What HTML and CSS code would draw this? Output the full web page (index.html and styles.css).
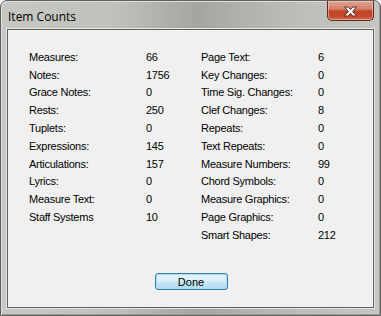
FILE: index.html
```html
<!DOCTYPE html>
<html lang="en">
<head>
  <meta charset="UTF-8">
  <title>Item Counts</title>
  <link rel="stylesheet" href="styles.css">
</head>
<body>

<div class="window">
  <div class="titlebar">
    <span class="title">Item Counts</span>
    <button class="close" aria-label="Close">
      <svg width="15" height="11" viewBox="0 0 15 11">
        <path d="M1.5 1 H5.3 L7.5 3.6 L9.7 1 H13.5 L9.6 5.5 L13.5 10 H9.7 L7.5 7.4 L5.3 10 H1.5 L5.4 5.5 Z" fill="#ffffff" stroke="#5a2a20" stroke-width="1" stroke-linejoin="round"/>
      </svg>
    </button>
  </div>

  <div class="client">
    <div class="counts">
      <div class="col">
        <span>Measures:</span><span>66</span>
        <span>Notes:</span><span>1756</span>
        <span>Grace Notes:</span><span>0</span>
        <span>Rests:</span><span>250</span>
        <span>Tuplets:</span><span>0</span>
        <span>Expressions:</span><span>145</span>
        <span>Articulations:</span><span>157</span>
        <span>Lyrics:</span><span>0</span>
        <span>Measure Text:</span><span>0</span>
        <span>Staff Systems</span><span>10</span>
      </div>
      <div class="col">
        <span>Page Text:</span><span>6</span>
        <span>Key Changes:</span><span>0</span>
        <span>Time Sig. Changes:</span><span>0</span>
        <span>Clef Changes:</span><span>8</span>
        <span>Repeats:</span><span>0</span>
        <span>Text Repeats:</span><span>0</span>
        <span>Measure Numbers:</span><span>99</span>
        <span>Chord Symbols:</span><span>0</span>
        <span>Measure Graphics:</span><span>0</span>
        <span>Page Graphics:</span><span>0</span>
        <span>Smart Shapes:</span><span>212</span>
      </div>
    </div>

    <div class="actions">
      <button class="done">Done</button>
    </div>
  </div>
</div>

</body>
</html>
```

FILE: styles.css
```css
* {
  box-sizing: border-box;
  margin: 0;
  padding: 0;
}

body {
  background: #ffffff;
  font-family: 'Liberation Sans', Arial, sans-serif;
  font-size: 11px;
  color: #000000;
}

.window {
  width: 381px;
  height: 316px;
  display: flex;
  flex-direction: column;
  border: 1px solid #5f615d;
  border-radius: 7px 7px 0 0;
  padding: 0 6px 7px 6px;
  background: linear-gradient(90deg, #c6c8c3 0%, #bfc1bc 30%, #a3a5a0 52%, #aeb0ab 62%, #bdbfba 80%, #c4c6c1 100%);
  box-shadow: inset 1px 1px 0 #dfe0dd, inset -1px -1px 0 #9a9c97;
}

.titlebar {
  height: 28px;
  display: flex;
  align-items: flex-start;
}

.title {
  font-family: 'Open Sans', 'DejaVu Sans', sans-serif;
  font-size: 12px;
  padding: 7px 0 0 1px;
  color: #000000;
}

.close {
  margin-left: auto;
  width: 47px;
  height: 20px;
  border: 1px solid #5b2c22;
  border-top: none;
  border-radius: 0 0 5px 5px;
  background: linear-gradient(180deg, #dea394 0%, #d5836f 40%, #c24427 55%, #c4482c 80%, #d36e55 100%);
  box-shadow: inset 0 0 0 1px rgba(255, 220, 200, 0.5);
  display: flex;
  align-items: center;
  justify-content: center;
  padding-top: 1px;
}

.client {
  flex: 1;
  border: 1px solid #606060;
  background: #f0f0f0;
  box-shadow: 0 0 0 1px #e6e7e4;
  display: flex;
  flex-direction: column;
  padding: 18px 0 17px 21px;
}

.counts {
  display: flex;
  letter-spacing: -0.25px;
}

.col {
  display: grid;
  grid-template-columns: 117px auto;
  grid-auto-rows: 17.8px;
  align-items: center;
  width: 172px;
}

.actions {
  margin-top: auto;
  display: flex;
  justify-content: center;
  padding-right: 20px;
}

.done {
  width: 73px;
  height: 17px;
  font-family: 'Liberation Sans', Arial, sans-serif;
  font-size: 11px;
  color: #000000;
  border: 1px solid #3d7bad;
  border-radius: 3px;
  background: linear-gradient(180deg, #e5f4fc 0%, #dbeffa 48%, #c4e5f6 52%, #b3dcf2 100%);
  box-shadow: inset 0 0 0 1px #a6e0f8;
}
```
